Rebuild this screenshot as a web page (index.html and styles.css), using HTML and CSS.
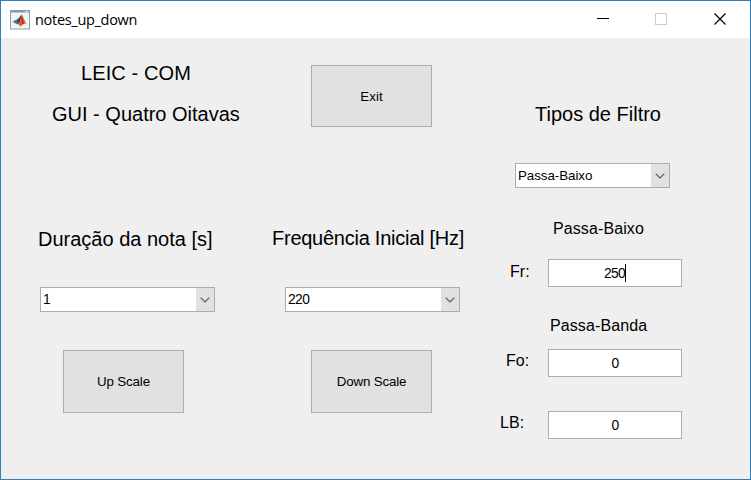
FILE: index.html
```html
<!DOCTYPE html>
<html lang="pt">
<head>
<meta charset="utf-8">
<title>notes_up_down</title>
<link rel="stylesheet" href="styles.css">
</head>
<body>
<div class="window">
  <header class="titlebar">
    <svg class="app-icon" width="20" height="20" viewBox="0 0 20 20">
      <rect x=".5" y=".5" width="19" height="18.5" fill="#f1f5f8" stroke="#929daa"/>
      <path d="M1 1.500h18" stroke="#7d9bbb" stroke-width="2"/>
      <path d="M15 1.500h3" stroke="#d3dde8"/>
      <path d="M2.500 11.500l4.500-2 3 3-3 2z" fill="#3c78a8"/>
      <path d="M7 9.500c2-.5 2.500-3.500 4.500-4.500l-1 7-2 2z" fill="#28476a"/>
      <path d="M11.500 4.500c1.500 1 3 7 5.500 10-2-1.500-3-1-4.500.5L10 16.500 8 13.500c2-1 2.500-5.500 3.500-9z" fill="#e0602a"/>
      <path d="M11.500 4.500c1 3 1 6.500 3 9-1.500-.2-1.500.5-2 1.500-.8-3-1-6-1-10.500z" fill="#a8301a"/>
    </svg>
    <span class="title">notes_up_down</span>
    <svg class="controls" width="130" height="14" viewBox="0 0 130 14" fill="none" shape-rendering="crispEdges">
      <path d="M0 5.500h12" stroke="#000"/>
      <rect x="58.500" y="0.500" width="11" height="11" stroke="#ccc"/>
      <path d="M117.500 .5l11 11M128.500 .5l-11 11" stroke="#000" stroke-width="1.200" shape-rendering="auto"/>
    </svg>
  </header>
  <main class="panel">
    <section class="column duration">
      <h1 class="heading course">LEIC - COM</h1>
      <h2 class="heading subtitle">GUI - Quatro Oitavas</h2>
      <h2 class="heading duration-label">Duração da nota [s]</h2>
      <div class="combo"><span>1</span><i><svg width="10" height="6" viewBox="0 0 10 6"><path d="M.7.7L5 5 9.300.7"/></svg></i></div>
      <button class="push up">Up Scale</button>
    </section>
    <section class="column frequency">
      <button class="push exit">Exit</button>
      <h2 class="heading frequency-label">Frequência Inicial [Hz]</h2>
      <div class="combo"><span>220</span><i><svg width="10" height="6" viewBox="0 0 10 6"><path d="M.7.7L5 5 9.300.7"/></svg></i></div>
      <button class="push down">Down Scale</button>
    </section>
    <section class="column filter">
      <h2 class="heading filter-label">Tipos de Filtro</h2>
      <div class="combo"><span class="word">Passa-Baixo</span><i><svg width="10" height="6" viewBox="0 0 10 6"><path d="M.7.7L5 5 9.300.7"/></svg></i></div>
      <h3 class="label low">Passa-Baixo</h3>
      <div class="field fr"><span class="label">Fr:</span><div class="edit"><span>250</span><b class="caret"></b></div></div>
      <h3 class="label band">Passa-Banda</h3>
      <div class="field fo"><span class="label">Fo:</span><div class="edit">0</div></div>
      <div class="field lb"><span class="label">LB:</span><div class="edit">0</div></div>
    </section>
  </main>
</div>
</body>
</html>
```
FILE: styles.css
```css
* { box-sizing: border-box; }

body {
  margin: 0;
  font-family: "Liberation Sans", Arial, sans-serif;
  color: #000;
}

.window {
  width: 751px;
  height: 480px;
  border: 1px solid #2f7fbd;
  background: #efefef;
  overflow: hidden;
}

.titlebar {
  display: flex;
  align-items: center;
  height: 37px;
  padding: 0 23px 0 9px;
  background: #fff;
}

.title {
  margin-left: 5px;
  font: 14.5px/20px "Open Sans", sans-serif;
  letter-spacing: -0.3px;
}

.controls { margin-left: auto; }

.panel {
  display: grid;
  grid-template-columns: 247px 247px 1fr;
  height: 441px;
}

.column {
  display: flex;
  flex-direction: column;
  align-items: flex-start;
}

.heading {
  margin: 0;
  font-size: 20px;
  font-weight: 400;
  line-height: 24px;
  white-space: nowrap;
}

.label {
  margin: 0;
  font-size: 16px;
  font-weight: 400;
  line-height: 20px;
  letter-spacing: 0.1px;
  white-space: nowrap;
}

.push {
  width: 121px;
  height: 63px;
  padding: 0;
  border: 1px solid #adadad;
  background: #e1e1e1;
  color: #000;
  font: 13.33px "Liberation Sans", Arial, sans-serif;
  letter-spacing: -0.15px;
}

.combo {
  display: flex;
  width: 175px;
  height: 25px;
  border: 1px solid #adadad;
  background: #fff;
  font-size: 13.8px;
  line-height: 24px;
}

.combo span {
  flex: 1;
  padding-left: 2px;
  letter-spacing: -0.6px;
}

.combo .word {
  font-size: 13.33px;
  letter-spacing: -0.05px;
}

.combo i {
  display: grid;
  place-items: center;
  width: 18px;
  background: #e1e1e1;
}

.combo path {
  fill: none;
  stroke: #555;
  stroke-width: 1.1;
}

.field { display: flex; }

.edit {
  display: flex;
  align-items: center;
  justify-content: center;
  width: 134px;
  height: 28px;
  border: 1px solid #adadad;
  background: #fff;
  font-size: 13.8px;
  letter-spacing: -0.6px;
}

.caret {
  width: 1px;
  height: 18px;
  background: #000;
}

.course { margin: 23px 0 0 80px; letter-spacing: 0.1px; }
.subtitle { margin: 17px 0 0 51px; }
.duration-label { margin: 101px 0 0 37px; }
.duration .combo { margin: 36px 0 0 39px; }
.up { margin: 38px 0 0 62px; }

.exit { height: 62px; margin: 27px 0 0 63px; letter-spacing: 0.1px; }
.frequency-label { margin: 99px 0 0 24px; letter-spacing: -0.25px; }
.frequency .combo { margin: 37px 0 0 37px; }
.down { margin: 38px 0 0 63px; }

.filter-label { margin: 64px 0 0 40px; }
.filter .combo { width: 155px; margin: 37px 0 0 20px; }
.low { margin: 31px 0 0 58px; }
.fr { margin: 20px 0 0 15px; }
.band { margin: 29px 0 0 55px; }
.fo { margin: 13px 0 0 11px; }
.lb { margin: 34px 0 0 5px; }
.fr .label { width: 38px; margin-top: 3px; }
.fo .label { width: 42px; margin-top: 2px; }
.lb .label { width: 48px; margin-top: 2px; }
```
